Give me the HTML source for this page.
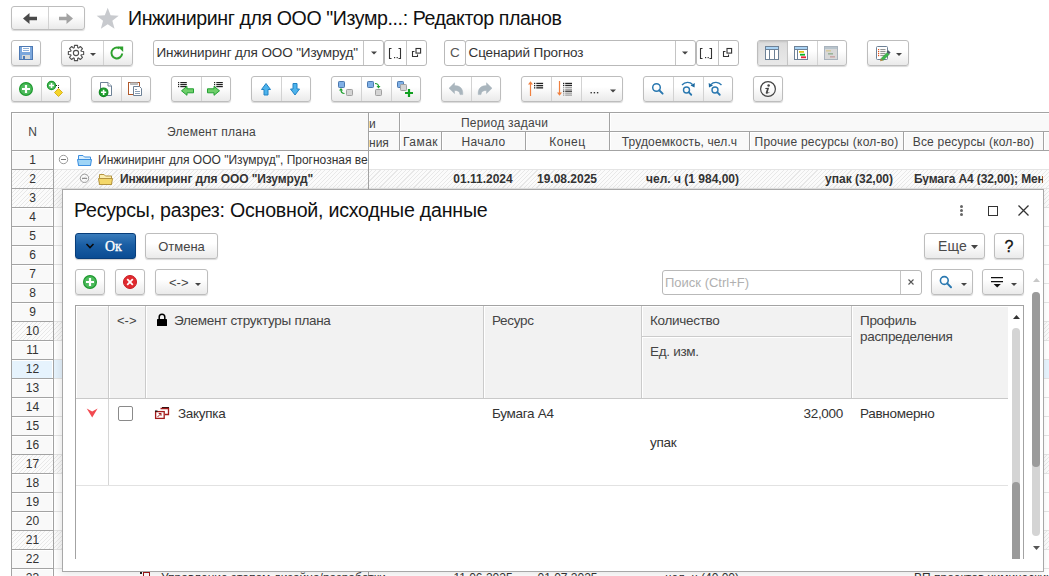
<!DOCTYPE html><html><head><meta charset="utf-8"><style>
*{box-sizing:border-box;margin:0;padding:0}
html,body{width:1049px;height:576px;overflow:hidden;background:#fff;font-family:"Liberation Sans",sans-serif;color:#333}
body{position:relative}
.a{position:absolute}
.btn{position:absolute;border:1px solid #bdbdbd;border-radius:3px;background:linear-gradient(#fff 0%,#fff 40%,#eaeaea 100%);box-shadow:0 1px 1px rgba(0,0,0,.15)}
.sep{position:absolute;top:0;bottom:0;width:1px;background:#d2d2d2}
.inp{position:absolute;border:1px solid #b9b9b9;border-radius:3px;background:#fff}
.t{position:absolute;white-space:nowrap;line-height:1}
.hatch{background:repeating-linear-gradient(135deg,#fbfbfb 0px,#fbfbfb 2.2px,#e8e8e8 2.2px,#e8e8e8 3px)}
svg{position:absolute;overflow:visible}
</style></head><body>
<div class="a" style="left:11px;top:112px;width:1038px;height:464px;background:#fff;border-left:1px solid #a3a3a3;border-top:1px solid #a3a3a3;overflow:hidden">
<div class="a" style="left:0;top:0;width:1100px;height:38px;background:#a3a3a3"></div>
<div class="a" style="left:0px;top:0px;width:41px;height:37px;background:#f9f9f9;border-left:1px solid #fff;border-top:1px solid #fff"></div>
<div class="a" style="left:42px;top:0px;width:314px;height:37px;background:#f9f9f9;border-left:1px solid #fff;border-top:1px solid #fff"></div>
<div class="a" style="left:357px;top:0px;width:30px;height:18px;background:#f9f9f9;border-left:1px solid #fff;border-top:1px solid #fff"></div>
<div class="a" style="left:357px;top:19px;width:30px;height:18px;background:#f9f9f9;border-left:1px solid #fff;border-top:1px solid #fff"></div>
<div class="a" style="left:388px;top:0px;width:209px;height:18px;background:#f9f9f9;border-left:1px solid #fff;border-top:1px solid #fff"></div>
<div class="a" style="left:388px;top:19px;width:41px;height:18px;background:#f9f9f9;border-left:1px solid #fff;border-top:1px solid #fff"></div>
<div class="a" style="left:430px;top:19px;width:83px;height:18px;background:#f9f9f9;border-left:1px solid #fff;border-top:1px solid #fff"></div>
<div class="a" style="left:514px;top:19px;width:83px;height:18px;background:#f9f9f9;border-left:1px solid #fff;border-top:1px solid #fff"></div>
<div class="a" style="left:598px;top:0px;width:490px;height:18px;background:#f9f9f9;border-left:1px solid #fff;border-top:1px solid #fff"></div>
<div class="a" style="left:598px;top:19px;width:139px;height:18px;background:#f9f9f9;border-left:1px solid #fff;border-top:1px solid #fff"></div>
<div class="a" style="left:738px;top:19px;width:153px;height:18px;background:#f9f9f9;border-left:1px solid #fff;border-top:1px solid #fff"></div>
<div class="a" style="left:892px;top:19px;width:139px;height:18px;background:#f9f9f9;border-left:1px solid #fff;border-top:1px solid #fff"></div>
<div class="a" style="left:1032px;top:19px;width:56px;height:18px;background:#f9f9f9;border-left:1px solid #fff;border-top:1px solid #fff"></div>
<div class="a" style="left:0;top:38px;width:41px;height:18px;background:#f9f9f9;border-top:1px solid #fff;border-right:1px solid #fff"></div>
<div class="a" style="left:0;top:56px;width:41px;height:1px;background:#a3a3a3"></div>
<div class="a" style="left:42px;top:56px;width:1100px;height:1px;background:#e4e4e4"></div>
<div class="t" style="left:0;top:41px;width:41px;text-align:center;font-size:12px;color:#333">1</div>
<div class="a hatch" style="left:0;top:57px;width:1100px;height:18px"></div>
<div class="a" style="left:0;top:75px;width:41px;height:1px;background:#a3a3a3"></div>
<div class="a" style="left:42px;top:75px;width:1100px;height:1px;background:#e4e4e4"></div>
<div class="t" style="left:0;top:60px;width:41px;text-align:center;font-size:12px;color:#333">2</div>
<div class="a hatch" style="left:0;top:76px;width:1100px;height:18px"></div>
<div class="a" style="left:0;top:94px;width:41px;height:1px;background:#a3a3a3"></div>
<div class="a" style="left:42px;top:94px;width:1100px;height:1px;background:#e4e4e4"></div>
<div class="t" style="left:0;top:79px;width:41px;text-align:center;font-size:12px;color:#333">3</div>
<div class="a" style="left:0;top:95px;width:41px;height:18px;background:#f9f9f9;border-top:1px solid #fff;border-right:1px solid #fff"></div>
<div class="a" style="left:0;top:113px;width:41px;height:1px;background:#a3a3a3"></div>
<div class="a" style="left:42px;top:113px;width:1100px;height:1px;background:#e4e4e4"></div>
<div class="t" style="left:0;top:98px;width:41px;text-align:center;font-size:12px;color:#333">4</div>
<div class="a" style="left:0;top:114px;width:41px;height:18px;background:#f9f9f9;border-top:1px solid #fff;border-right:1px solid #fff"></div>
<div class="a" style="left:0;top:132px;width:41px;height:1px;background:#a3a3a3"></div>
<div class="a" style="left:42px;top:132px;width:1100px;height:1px;background:#e4e4e4"></div>
<div class="t" style="left:0;top:117px;width:41px;text-align:center;font-size:12px;color:#333">5</div>
<div class="a" style="left:0;top:133px;width:41px;height:18px;background:#f9f9f9;border-top:1px solid #fff;border-right:1px solid #fff"></div>
<div class="a" style="left:0;top:151px;width:41px;height:1px;background:#a3a3a3"></div>
<div class="a" style="left:42px;top:151px;width:1100px;height:1px;background:#e4e4e4"></div>
<div class="t" style="left:0;top:136px;width:41px;text-align:center;font-size:12px;color:#333">6</div>
<div class="a" style="left:0;top:152px;width:41px;height:18px;background:#f9f9f9;border-top:1px solid #fff;border-right:1px solid #fff"></div>
<div class="a" style="left:0;top:170px;width:41px;height:1px;background:#a3a3a3"></div>
<div class="a" style="left:42px;top:170px;width:1100px;height:1px;background:#e4e4e4"></div>
<div class="t" style="left:0;top:155px;width:41px;text-align:center;font-size:12px;color:#333">7</div>
<div class="a" style="left:0;top:171px;width:41px;height:18px;background:#f9f9f9;border-top:1px solid #fff;border-right:1px solid #fff"></div>
<div class="a" style="left:0;top:189px;width:41px;height:1px;background:#a3a3a3"></div>
<div class="a" style="left:42px;top:189px;width:1100px;height:1px;background:#e4e4e4"></div>
<div class="t" style="left:0;top:174px;width:41px;text-align:center;font-size:12px;color:#333">8</div>
<div class="a" style="left:0;top:190px;width:41px;height:18px;background:#f9f9f9;border-top:1px solid #fff;border-right:1px solid #fff"></div>
<div class="a" style="left:0;top:208px;width:41px;height:1px;background:#a3a3a3"></div>
<div class="a" style="left:42px;top:208px;width:1100px;height:1px;background:#e4e4e4"></div>
<div class="t" style="left:0;top:193px;width:41px;text-align:center;font-size:12px;color:#333">9</div>
<div class="a hatch" style="left:0;top:209px;width:1100px;height:18px"></div>
<div class="a" style="left:0;top:227px;width:41px;height:1px;background:#a3a3a3"></div>
<div class="a" style="left:42px;top:227px;width:1100px;height:1px;background:#e4e4e4"></div>
<div class="t" style="left:0;top:212px;width:41px;text-align:center;font-size:12px;color:#333">10</div>
<div class="a" style="left:0;top:228px;width:41px;height:18px;background:#f9f9f9;border-top:1px solid #fff;border-right:1px solid #fff"></div>
<div class="a" style="left:0;top:246px;width:41px;height:1px;background:#a3a3a3"></div>
<div class="a" style="left:42px;top:246px;width:1100px;height:1px;background:#e4e4e4"></div>
<div class="t" style="left:0;top:231px;width:41px;text-align:center;font-size:12px;color:#333">11</div>
<div class="a" style="left:0;top:247px;width:41px;height:18px;background:#e6f3fd;border-top:1px solid #fff;border-right:1px solid #fff"></div>
<div class="a" style="left:42px;top:247px;width:1100px;height:18px;background:#e6f3fd"></div>
<div class="a" style="left:0;top:265px;width:41px;height:1px;background:#a3a3a3"></div>
<div class="a" style="left:42px;top:265px;width:1100px;height:1px;background:#e4e4e4"></div>
<div class="t" style="left:0;top:250px;width:41px;text-align:center;font-size:12px;color:#333">12</div>
<div class="a" style="left:0;top:266px;width:41px;height:18px;background:#f9f9f9;border-top:1px solid #fff;border-right:1px solid #fff"></div>
<div class="a" style="left:0;top:284px;width:41px;height:1px;background:#a3a3a3"></div>
<div class="a" style="left:42px;top:284px;width:1100px;height:1px;background:#e4e4e4"></div>
<div class="t" style="left:0;top:269px;width:41px;text-align:center;font-size:12px;color:#333">13</div>
<div class="a" style="left:0;top:285px;width:41px;height:18px;background:#f9f9f9;border-top:1px solid #fff;border-right:1px solid #fff"></div>
<div class="a" style="left:0;top:303px;width:41px;height:1px;background:#a3a3a3"></div>
<div class="a" style="left:42px;top:303px;width:1100px;height:1px;background:#e4e4e4"></div>
<div class="t" style="left:0;top:288px;width:41px;text-align:center;font-size:12px;color:#333">14</div>
<div class="a" style="left:0;top:304px;width:41px;height:18px;background:#f9f9f9;border-top:1px solid #fff;border-right:1px solid #fff"></div>
<div class="a" style="left:0;top:322px;width:41px;height:1px;background:#a3a3a3"></div>
<div class="a" style="left:42px;top:322px;width:1100px;height:1px;background:#e4e4e4"></div>
<div class="t" style="left:0;top:307px;width:41px;text-align:center;font-size:12px;color:#333">15</div>
<div class="a" style="left:0;top:323px;width:41px;height:18px;background:#f9f9f9;border-top:1px solid #fff;border-right:1px solid #fff"></div>
<div class="a" style="left:0;top:341px;width:41px;height:1px;background:#a3a3a3"></div>
<div class="a" style="left:42px;top:341px;width:1100px;height:1px;background:#e4e4e4"></div>
<div class="t" style="left:0;top:326px;width:41px;text-align:center;font-size:12px;color:#333">16</div>
<div class="a hatch" style="left:0;top:342px;width:1100px;height:18px"></div>
<div class="a" style="left:0;top:360px;width:41px;height:1px;background:#a3a3a3"></div>
<div class="a" style="left:42px;top:360px;width:1100px;height:1px;background:#e4e4e4"></div>
<div class="t" style="left:0;top:345px;width:41px;text-align:center;font-size:12px;color:#333">17</div>
<div class="a" style="left:0;top:361px;width:41px;height:18px;background:#f9f9f9;border-top:1px solid #fff;border-right:1px solid #fff"></div>
<div class="a" style="left:0;top:379px;width:41px;height:1px;background:#a3a3a3"></div>
<div class="a" style="left:42px;top:379px;width:1100px;height:1px;background:#e4e4e4"></div>
<div class="t" style="left:0;top:364px;width:41px;text-align:center;font-size:12px;color:#333">18</div>
<div class="a" style="left:0;top:380px;width:41px;height:18px;background:#f9f9f9;border-top:1px solid #fff;border-right:1px solid #fff"></div>
<div class="a" style="left:0;top:398px;width:41px;height:1px;background:#a3a3a3"></div>
<div class="a" style="left:42px;top:398px;width:1100px;height:1px;background:#e4e4e4"></div>
<div class="t" style="left:0;top:383px;width:41px;text-align:center;font-size:12px;color:#333">19</div>
<div class="a" style="left:0;top:399px;width:41px;height:18px;background:#f9f9f9;border-top:1px solid #fff;border-right:1px solid #fff"></div>
<div class="a" style="left:0;top:417px;width:41px;height:1px;background:#a3a3a3"></div>
<div class="a" style="left:42px;top:417px;width:1100px;height:1px;background:#e4e4e4"></div>
<div class="t" style="left:0;top:402px;width:41px;text-align:center;font-size:12px;color:#333">20</div>
<div class="a hatch" style="left:0;top:418px;width:1100px;height:18px"></div>
<div class="a" style="left:0;top:436px;width:41px;height:1px;background:#a3a3a3"></div>
<div class="a" style="left:42px;top:436px;width:1100px;height:1px;background:#e4e4e4"></div>
<div class="t" style="left:0;top:421px;width:41px;text-align:center;font-size:12px;color:#333">21</div>
<div class="a" style="left:0;top:437px;width:41px;height:18px;background:#f9f9f9;border-top:1px solid #fff;border-right:1px solid #fff"></div>
<div class="a" style="left:0;top:455px;width:41px;height:1px;background:#a3a3a3"></div>
<div class="a" style="left:42px;top:455px;width:1100px;height:1px;background:#e4e4e4"></div>
<div class="t" style="left:0;top:440px;width:41px;text-align:center;font-size:12px;color:#333">22</div>
<div class="a" style="left:0;top:456px;width:41px;height:18px;background:#f9f9f9;border-top:1px solid #fff;border-right:1px solid #fff"></div>
<div class="a" style="left:0;top:474px;width:41px;height:1px;background:#a3a3a3"></div>
<div class="a" style="left:42px;top:474px;width:1100px;height:1px;background:#e4e4e4"></div>
<div class="t" style="left:0;top:459px;width:41px;text-align:center;font-size:12px;color:#333">23</div>
<div class="a" style="left:41px;top:-12px;width:1px;height:600px;background:#a3a3a3;top:0"></div>
<div class="a" style="left:356px;top:0;width:1px;height:600px;background:#a3a3a3"></div>
<div class="t" style="left:0;top:13px;width:41px;text-align:center;font-size:12px;color:#444">N</div>
<div class="t" style="left:42px;top:13px;width:315px;text-align:center;font-size:12px;color:#444;letter-spacing:.25px">Элемент плана</div>
<div class="t" style="left:357px;top:5px;font-size:12px;color:#444">и</div>
<div class="t" style="left:357px;top:24px;font-size:12px;color:#444">ния</div>
<div class="t" style="left:388px;top:4px;width:209px;text-align:center;font-size:12px;letter-spacing:.25px;color:#444">Период задачи</div>
<div class="t" style="left:388px;top:23px;width:41px;text-align:center;font-size:12px;letter-spacing:0.5px;color:#444">Гамак</div>
<div class="t" style="left:430px;top:23px;width:83px;text-align:center;font-size:12px;letter-spacing:0.4px;color:#444">Начало</div>
<div class="t" style="left:514px;top:23px;width:83px;text-align:center;font-size:12px;letter-spacing:0.5px;color:#444">Конец</div>
<div class="t" style="left:598px;top:23px;width:139px;text-align:center;font-size:12px;letter-spacing:0.13px;color:#444">Трудоемкость, чел.ч</div>
<div class="t" style="left:738px;top:23px;width:153px;text-align:center;font-size:12px;letter-spacing:0.25px;color:#444">Прочие ресурсы (кол-во)</div>
<div class="t" style="left:892px;top:23px;width:139px;text-align:center;font-size:12px;letter-spacing:0.2px;color:#444">Все ресурсы (кол-во)</div>
<div class="t" style="left:86px;top:41px;width:270px;overflow:hidden;font-size:12px;color:#333">Инжиниринг для ООО "Изумруд", Прогнозная версия</div>
<div class="t" style="left:108px;top:60px;font-size:12px;font-weight:bold;letter-spacing:-.1px;color:#333">Инжиниринг для ООО "Изумруд"</div>
<div class="t" style="left:429px;top:60px;width:84px;text-align:center;font-size:12px;font-weight:bold;color:#333">01.11.2024</div>
<div class="t" style="left:513px;top:60px;width:84px;text-align:center;font-size:12px;font-weight:bold;color:#333">19.08.2025</div>
<div class="t" style="left:597px;top:60px;width:130px;text-align:right;font-size:12px;font-weight:bold;color:#333">чел. ч (1 984,00)</div>
<div class="t" style="left:737px;top:60px;width:144px;text-align:right;font-size:12px;font-weight:bold;color:#333">упак (32,00)</div>
<div class="t" style="left:902px;top:60px;width:129px;overflow:hidden;font-size:12px;font-weight:bold;letter-spacing:-.12px;color:#333">Бумага А4 (32,00); Менеджер</div>
<div class="t" style="left:149px;top:459px;font-size:12px;color:#333">Управление этапом дизайна/разработки</div>
<div class="t" style="left:429px;top:459px;width:84px;text-align:center;font-size:12px;color:#333">11.06.2025</div>
<div class="t" style="left:513px;top:459px;width:85px;text-align:center;font-size:12px;color:#333">01.07.2025</div>
<div class="t" style="left:597px;top:459px;width:130px;text-align:right;font-size:12px;color:#333">чел. ч (40,00)</div>
<div class="t" style="left:902px;top:459px;font-size:12px;color:#333">ВП проектов химических</div>
</div>
<div class="btn" style="left:11px;top:6px;width:74px;height:24px"><div class="sep" style="left:36px"></div></div>
<div class="t" style="left:128px;top:9px;font-size:19.6px;color:#111;letter-spacing:-.41px">Инжиниринг для ООО "Изумр...: Редактор планов</div>
<div class="btn" style="left:11px;top:40px;width:30px;height:26px"></div>
<div class="btn" style="left:61px;top:40px;width:72px;height:26px"><div class="sep" style="left:41px"></div></div>
<div class="inp" style="left:153px;top:40px;width:231px;height:26px"><div class="sep" style="left:209px;background:#c4c4c4"></div><div class="t" style="left:2.5px;top:5px;font-size:13.5px;letter-spacing:-.12px;color:#333">Инжиниринг для ООО "Изумруд"</div></div>
<div class="inp" style="left:384px;top:40px;width:43px;height:26px"><div class="sep" style="left:21px;background:#c4c4c4"></div></div>
<div class="inp" style="left:444px;top:40px;width:22px;height:26px"><div class="t" style="left:5px;top:5px;font-size:13.5px;color:#555">С</div></div>
<div class="inp" style="left:465px;top:40px;width:231px;height:26px"><div class="sep" style="left:209px;background:#c4c4c4"></div><div class="t" style="left:2.5px;top:5px;font-size:13.5px;letter-spacing:-.12px;color:#333">Сценарий Прогноз</div></div>
<div class="inp" style="left:696px;top:40px;width:43px;height:26px"><div class="sep" style="left:21px;background:#c4c4c4"></div></div>
<div class="btn" style="left:757px;top:40px;width:90px;height:26px;overflow:hidden"><div class="a" style="left:0;top:0;width:30px;height:24px;background:linear-gradient(#dcdcdc,#e9e9e9);box-shadow:inset 0 1px 2px rgba(0,0,0,.12)"></div><div class="sep" style="left:29px;background:#c4c4c4"></div><div class="sep" style="left:59px"></div></div>
<div class="btn" style="left:867px;top:40px;width:42px;height:26px"></div>
<div class="btn" style="left:11px;top:76px;width:60px;height:26px"><div class="sep" style="left:29px"></div></div>
<div class="btn" style="left:91px;top:76px;width:60px;height:26px"><div class="sep" style="left:29px"></div></div>
<div class="btn" style="left:171px;top:76px;width:60px;height:26px"><div class="sep" style="left:29px"></div></div>
<div class="btn" style="left:251px;top:76px;width:60px;height:26px"><div class="sep" style="left:29px"></div></div>
<div class="btn" style="left:331px;top:76px;width:90px;height:26px"><div class="sep" style="left:29px"></div><div class="sep" style="left:59px"></div></div>
<div class="btn" style="left:441px;top:76px;width:60px;height:26px"><div class="sep" style="left:29px"></div></div>
<div class="btn" style="left:521px;top:76px;width:102px;height:26px"><div class="sep" style="left:29px"></div><div class="sep" style="left:59px"></div></div>
<div class="btn" style="left:643px;top:76px;width:90px;height:26px"><div class="sep" style="left:29px"></div><div class="sep" style="left:59px"></div></div>
<div class="btn" style="left:753px;top:76px;width:30px;height:26px"></div>
<svg style="left:0;top:0" width="1049" height="576"><path d="M23 18.5L29.5 13V16.8H37V20.3H29.5V24Z" fill="#4a4a4a"/><path d="M73 18.5L66.5 13V16.8H59V20.3H66.5V24Z" fill="#a3a3a3"/><path d="M107.70 7.70L110.58 15.34L118.73 15.72L112.36 20.81L114.52 28.68L107.70 24.20L100.88 28.68L103.04 20.81L96.67 15.72L104.82 15.34Z" fill="#c8cace"/><rect x="19.5" y="46.5" width="13" height="13" fill="#7ba7dc" stroke="#4d79b3"/><rect x="22" y="47" width="8" height="5" fill="#fff"/><path d="M23 48.5H29M23 50.5H29" stroke="#8fb0d8" stroke-width="1"/><rect x="22" y="55" width="8" height="4" fill="#d5d9d9"/><rect x="23" y="56" width="2" height="3" fill="#4d79b3"/><path d="M83.64 51.45L83.64 54.55L81.22 54.73L80.92 55.47L82.50 57.31L80.31 59.50L78.47 57.92L77.73 58.22L77.55 60.64L74.45 60.64L74.27 58.22L73.53 57.92L71.69 59.50L69.50 57.31L71.08 55.47L70.78 54.73L68.36 54.55L68.36 51.45L70.78 51.27L71.08 50.53L69.50 48.69L71.69 46.50L73.53 48.08L74.27 47.78L74.45 45.36L77.55 45.36L77.73 47.78L78.47 48.08L80.31 46.50L82.50 48.69L80.92 50.53L81.22 51.27Z" fill="#fff" stroke="#505050" stroke-width="1.1" stroke-linejoin="round"/><circle cx="76" cy="53" r="2.6" fill="none" stroke="#505050" stroke-width="1.1"/><path d="M90 53H96L93 56Z" fill="#444"/><path d="M122.2 53.5A5.4 5.4 0 1 1 119.5 48.3" stroke="#2ea12e" stroke-width="2" fill="none"/><path d="M117.6 46.4H123.2V52Z" fill="#2ea12e"/><path d="M371 51.5H377L374 54.5Z" fill="#444"/><path d="M682 51.5H688L685 54.5Z" fill="#444"/><path d="M391.5 48.5H389.5V58.5H391.5M398.5 48.5H400.5V58.5H398.5" stroke="#333" stroke-width="1.1" fill="none"/><rect x="394" y="57" width="1.2" height="1.2" fill="#333"/><rect x="396.6" y="57" width="1.2" height="1.2" fill="#333"/><path d="M414.5 51.5H412.5V56.5H417.5V54.5" stroke="#333" stroke-width="1.1" fill="none"/><rect x="416" y="48.5" width="4.6" height="4.6" fill="none" stroke="#333" stroke-width="1.1"/><path d="M702.5 48.5H700.5V58.5H702.5M709.5 48.5H711.5V58.5H709.5" stroke="#333" stroke-width="1.1" fill="none"/><rect x="705" y="57" width="1.2" height="1.2" fill="#333"/><rect x="707.6" y="57" width="1.2" height="1.2" fill="#333"/><path d="M725.5 51.5H723.5V56.5H728.5V54.5" stroke="#333" stroke-width="1.1" fill="none"/><rect x="727" y="48.5" width="4.6" height="4.6" fill="none" stroke="#333" stroke-width="1.1"/><rect x="765.5" y="46.5" width="13" height="13" fill="#fff" stroke="#6d8196"/><rect x="766" y="47" width="12" height="2" fill="#a9d3f5"/><path d="M766 49.5H778" stroke="#6d8196" stroke-width="1"/><path d="M769.5 49.5V59.5M774.5 49.5V59.5" stroke="#6d8196" stroke-width="1"/><rect x="794.5" y="46.5" width="13" height="13" fill="#fff" stroke="#6d8196"/><rect x="795" y="47" width="12" height="2" fill="#a9d3f5"/><path d="M795 49.5H807" stroke="#6d8196" stroke-width="1"/><path d="M797.5 49.5V59.5" stroke="#6d8196" stroke-width="1"/><rect x="799" y="51" width="5" height="1.8" fill="#e2c21a"/><rect x="800" y="53.8" width="5" height="1.8" fill="#0ab12a"/><rect x="801" y="56.4" width="5" height="1.8" fill="#e8203a"/><rect x="824.5" y="46.5" width="13" height="13" fill="#d8d8d8" stroke="#a9b3bd"/><rect x="825" y="47" width="12" height="2" fill="#b8c4cc"/><rect x="826" y="50" width="5" height="1.6" fill="#d6cba0"/><rect x="828" y="53" width="5" height="1.6" fill="#9ab49a"/><rect x="830" y="56" width="5" height="1.6" fill="#c9a8a8"/><rect x="876.5" y="46.5" width="11" height="13" rx="1" fill="#fff" stroke="#6d8196"/><rect x="878" y="49" width="1.2" height="1.2" fill="#e0501a"/><rect x="880.3" y="49.1" width="5.2" height="1" fill="#8a8a8a"/><rect x="878" y="51" width="1.2" height="1.2" fill="#e0501a"/><rect x="880.3" y="51.1" width="5.2" height="1" fill="#8a8a8a"/><rect x="878" y="53" width="1.2" height="1.2" fill="#e0501a"/><rect x="880.3" y="53.1" width="5.2" height="1" fill="#8a8a8a"/><rect x="878" y="55" width="1.2" height="1.2" fill="#e0501a"/><rect x="880.3" y="55.1" width="5.2" height="1" fill="#8a8a8a"/><path d="M881 58.6L887.2 52.4L889.2 54.4L883 60.6Z" fill="#3cb84c" stroke="#2f8a3a" stroke-width=".5"/><path d="M886.6 51.8L888.2 50.2L890.6 52.6L889 54.2Z" fill="#4a5a68"/><path d="M881 58.6L880 61.2L883 60.6Z" fill="#a8803a"/><path d="M896 53H902L899 56Z" fill="#444"/><circle cx="26" cy="89" r="6.4" fill="#4dba5c" stroke="#1f9a30" stroke-width="1.2"/><path d="M22 89H30M26 85V93" stroke="#fff" stroke-width="2.2"/><circle cx="51.5" cy="85.5" r="4.1" fill="#4dba5c" stroke="#1f9a30" stroke-width="1.2"/><path d="M49.0 85.5H54.0M51.5 83.0V88.0" stroke="#fff" stroke-width="1.5"/><path d="M56 85.5H58.5V88" stroke="#111" stroke-width="1" stroke-dasharray="1 1" fill="none"/><path d="M58.5 88.5L62.5 92.5L58.5 96.5L54.5 92.5Z" fill="#f5d42a" stroke="#cfa400" stroke-width=".8"/><path d="M100.5 82.5H108L111.5 86V95.5H100.5Z" fill="#fff" stroke="#6d8196"/><path d="M108 82.5V86H111.5" fill="#fff" stroke="#6d8196"/><circle cx="103.6" cy="92.3" r="4.3" fill="#1ea02e" stroke="#158a24" stroke-width="1.2"/><path d="M101.0 92.3H106.19999999999999M103.6 89.7V94.89999999999999" stroke="#fff" stroke-width="1.6"/><rect x="128.5" y="82.5" width="11" height="12" fill="#fff" stroke="#b0582a"/><path d="M130.5 82.5H137.5V84.5H130.5Z" fill="#c0c0c0" stroke="#999" stroke-width=".6"/><path d="M133.5 86.5H139.5L141.5 88.5V95.5H133.5Z" fill="#fff" stroke="#6d8196"/><path d="M135 89.5H137M135 91.5H140M135 93.5H140" stroke="#8aa0b8" stroke-width="1"/><rect x="178" y="82" width="1.2" height="1.2" fill="#222"/><rect x="180.3" y="82" width="6.5" height="1.2" fill="#222"/><rect x="178" y="84" width="1.2" height="1.2" fill="#222"/><rect x="180.3" y="84" width="6.5" height="1.2" fill="#222"/><rect x="178" y="86" width="1.2" height="1.2" fill="#222"/><rect x="180.3" y="86" width="6.5" height="1.2" fill="#222"/><path d="M181.5 90.8L187 86.3V88.8H193.5V92.8H187V95.3Z" fill="#6fcf6a" stroke="#23a033" stroke-width="1" stroke-linejoin="round"/><rect x="214" y="82" width="1.2" height="1.2" fill="#222"/><rect x="216.3" y="82" width="6.5" height="1.2" fill="#222"/><rect x="214" y="84" width="1.2" height="1.2" fill="#222"/><rect x="216.3" y="84" width="6.5" height="1.2" fill="#222"/><rect x="214" y="86" width="1.2" height="1.2" fill="#222"/><rect x="216.3" y="86" width="6.5" height="1.2" fill="#222"/><path d="M219.5 90.8L214 86.3V88.8H207.5V92.8H214V95.3Z" fill="#6fcf6a" stroke="#23a033" stroke-width="1" stroke-linejoin="round"/><path d="M266 83.5L270.5 89.5H268V95H264V89.5H261.5Z" fill="#4db3ec" stroke="#2383c4" stroke-width="1" stroke-linejoin="round"/><path d="M295 95L299.5 89H297V83.5H293V89H290.5Z" fill="#4db3ec" stroke="#2383c4" stroke-width="1" stroke-linejoin="round"/><rect x="338.5" y="81.5" width="6" height="6" rx=".8" fill="#80b0e6" stroke="#4a78ae"/><rect x="346.5" y="89.5" width="6" height="6" rx=".8" fill="#d4d4d4" stroke="#a0a0a0"/><path d="M344.5 93.5C342 93.5 341 92 341 89.5" stroke="#1ea02e" stroke-width="1.2" fill="none"/><path d="M339 90.5L341 88L343 90.5Z" fill="#1ea02e"/><rect x="367.5" y="81.5" width="6" height="6" rx=".8" fill="#80b0e6" stroke="#4a78ae"/><rect x="375.5" y="89.5" width="6" height="6" rx=".8" fill="#d4d4d4" stroke="#a0a0a0"/><path d="M375 83.5C377 83.5 378.5 84.5 378.5 86.5" stroke="#1ea02e" stroke-width="1.2" fill="none"/><path d="M376.5 86L378.5 88.5L380.5 86Z" fill="#1ea02e"/><rect x="397.5" y="81.5" width="6" height="6" rx=".8" fill="#80b0e6" stroke="#4a78ae"/><rect x="400.5" y="84.5" width="6" height="6" rx=".8" fill="#d4d4d4" stroke="#a0a0a0"/><path d="M405 93H413M409 89V97" stroke="#10a020" stroke-width="2.2"/><path d="M449 88.2L454.5 82.8V85.6C460 85.6 463.2 88.5 462.8 94.6H460C459.8 91.5 458 90.4 454.5 90.4V93.6Z" fill="#a9b5bd" stroke="#a9b5bd" stroke-width=".5" stroke-linejoin="round"/><path d="M492 88.2L486.5 82.8V85.6C481 85.6 477.8 88.5 478.2 94.6H481C481.2 91.5 483 90.4 486.5 90.4V93.6Z" fill="#a9b5bd" stroke="#a9b5bd" stroke-width=".5" stroke-linejoin="round"/><path d="M530.5 96V83" stroke="#f08040" stroke-width="1.2"/><path d="M528 84.5L530.5 81.2L533 84.5Z" fill="#f08040"/><rect x="534" y="82.8" width="1.3" height="1.3" fill="#222"/><rect x="536.3" y="82.8" width="6.8" height="1.3" fill="#222"/><rect x="534" y="85.0" width="1.3" height="1.3" fill="#222"/><rect x="536.3" y="85.0" width="6.8" height="1.3" fill="#222"/><rect x="534" y="87.2" width="1.3" height="1.3" fill="#222"/><rect x="536.3" y="87.2" width="6.8" height="1.3" fill="#222"/><path d="M559.5 81V94" stroke="#f08040" stroke-width="1.2"/><path d="M557 92.5L559.5 95.8L562 92.5Z" fill="#f08040"/><rect x="563" y="82.8" width="1.3" height="1.2" fill="#222"/><rect x="565.2" y="82.8" width="6.8" height="1.2" fill="#222"/><rect x="563" y="84.75" width="1.3" height="1.2" fill="#222"/><rect x="565.2" y="84.75" width="6.8" height="1.2" fill="#222"/><rect x="563" y="86.7" width="1.3" height="1.2" fill="#999"/><rect x="565.2" y="86.7" width="6.8" height="1.2" fill="#999"/><rect x="563" y="88.64999999999999" width="1.3" height="1.2" fill="#999"/><rect x="565.2" y="88.64999999999999" width="6.8" height="1.2" fill="#999"/><rect x="563" y="90.6" width="1.3" height="1.2" fill="#222"/><rect x="565.2" y="90.6" width="6.8" height="1.2" fill="#222"/><rect x="563" y="92.55" width="1.3" height="1.2" fill="#999"/><rect x="565.2" y="92.55" width="6.8" height="1.2" fill="#999"/><rect x="563" y="94.5" width="1.3" height="1.2" fill="#999"/><rect x="565.2" y="94.5" width="6.8" height="1.2" fill="#999"/><rect x="590.5" y="92" width="1.4" height="1.4" fill="#333"/><rect x="593.7" y="92" width="1.4" height="1.4" fill="#333"/><rect x="596.9" y="92" width="1.4" height="1.4" fill="#333"/><path d="M610 89.5H616L613 92.5Z" fill="#444"/><circle cx="656.5" cy="87.5" r="3.8" fill="none" stroke="#2a78b0" stroke-width="1.5"/><path d="M659.236 90.236L662.636 93.63600000000001" stroke="#2a78b0" stroke-width="1.9" stroke-linecap="round"/><circle cx="686.5" cy="90" r="3" fill="none" stroke="#2a78b0" stroke-width="1.4"/><path d="M688.66 92.16L691.26 94.75999999999999" stroke="#2a78b0" stroke-width="1.7999999999999998" stroke-linecap="round"/><path d="M682 85C685 81.5 690 81.5 692.5 84.5" stroke="#2a78b0" stroke-width="1.3" fill="none"/><path d="M690.5 85.5L694.8 83L694.5 87.5Z" fill="#1a68a0"/><circle cx="715" cy="90" r="3" fill="none" stroke="#2a78b0" stroke-width="1.4"/><path d="M717.16 92.16L719.76 94.75999999999999" stroke="#2a78b0" stroke-width="1.7999999999999998" stroke-linecap="round"/><path d="M721.5 85C718.5 81.5 713.5 81.5 711 84.5" stroke="#2a78b0" stroke-width="1.3" fill="none"/><path d="M713 85.5L708.7 83L709 87.5Z" fill="#1a68a0"/><circle cx="768" cy="89" r="7.4" fill="none" stroke="#444" stroke-width="1.2"/><circle cx="768.6" cy="85.4" r="1.25" fill="#444"/><path d="M765.4 88.1L769.1 87.7L767.8 92.1Q767.7 92.7 768.4 92.4L769.6 91.7L769.4 92.6Q768 93.9 766.5 93.7Q765.5 93.5 765.8 92.4L766.9 88.9L765.3 88.9Z" fill="#444"/><circle cx="63.5" cy="159.5" r="4.2" fill="none" stroke="#9a9a9a" stroke-width="1"/><path d="M61 159.5H66" stroke="#777" stroke-width="1"/><circle cx="84.5" cy="178.3" r="4.2" fill="none" stroke="#9a9a9a" stroke-width="1"/><path d="M82 178.3H87" stroke="#777" stroke-width="1"/><path d="M78.5 165.5V155.5H83L84.5 157H90.5V165.5Z" fill="#d8eefc" stroke="#3d8fe0" stroke-width="1"/><path d="M77.5 159.5H90L91.5 159.5L90.5 165.5H78.5Z" fill="#9fd5f6" stroke="#3d8fe0" stroke-width="1"/><path d="M99.5 184.5V174.5H104L105.5 176H111.5V184.5Z" fill="#fbeeb0" stroke="#b59440" stroke-width="1"/><path d="M98.5 178.5H111L112.5 178.5L111.5 184.5H99.5Z" fill="#f4d86a" stroke="#b59440" stroke-width="1"/><rect x="140" y="572" width="2" height="2" fill="#222"/><rect x="143.5" y="572.5" width="6" height="5" fill="#fff" stroke="#a01818"/></svg>
<div class="a" style="left:62px;top:189px;width:982px;height:383px;border:1px solid #a8a8a8;background:#fff;box-shadow:-2px 2px 8px rgba(0,0,0,.10)"></div>
<div class="t" style="left:74px;top:201px;font-size:19.6px;color:#111;letter-spacing:-.23px">Ресурсы, разрез: Основной, исходные данные</div>
<div class="a" style="left:960px;top:205px;width:3px;height:3px;border-radius:50%;background:#666"></div>
<div class="a" style="left:960px;top:209px;width:3px;height:3px;border-radius:50%;background:#666"></div>
<div class="a" style="left:960px;top:213px;width:3px;height:3px;border-radius:50%;background:#666"></div>
<div class="a" style="left:988px;top:206px;width:9.5px;height:9.5px;border:1.4px solid #333"></div>
<svg style="left:1018px;top:205px" width="11" height="11"><path d="M0.5 0.5L10.5 10.5M10.5 0.5L0.5 10.5" stroke="#333" stroke-width="1.3"/></svg>
<div class="a" style="left:75px;top:233px;width:61px;height:26px;border-radius:3px;background:linear-gradient(#3a7cbb,#1a5ea4 45%,#0a4c93);border:1px solid #073d7a;box-shadow:0 1px 1px rgba(0,0,0,.2)"></div>
<svg style="left:85px;top:243px" width="10" height="6"><path d="M1.5 1L5 4.6L8.5 1" stroke="#0a0a0a" stroke-width="1.5" fill="none"/></svg>
<div class="t" style="left:105px;top:240px;font-size:14px;font-family:'Liberation Serif',serif;color:#fff;-webkit-text-stroke:.35px #fff">Ок</div>
<div class="btn" style="left:145px;top:233px;width:73px;height:26px"></div>
<div class="t" style="left:145px;top:240px;width:73px;text-align:center;font-size:13px;color:#444">Отмена</div>
<div class="btn" style="left:924px;top:233px;width:61px;height:26px"></div>
<div class="t" style="left:938px;top:239px;font-size:14px;letter-spacing:.2px;color:#4a4a4a">Еще</div>
<svg style="left:971px;top:245px" width="7" height="4"><path d="M0 0H7L3.5 4Z" fill="#444"/></svg>
<div class="btn" style="left:994px;top:233px;width:30px;height:26px"></div>
<div class="t" style="left:994px;top:239px;width:30px;text-align:center;font-size:16px;color:#111;-webkit-text-stroke:.3px #111">?</div>
<div class="btn" style="left:75px;top:269px;width:30px;height:26px"></div>
<div class="btn" style="left:115px;top:269px;width:30px;height:26px"></div>
<div class="btn" style="left:155px;top:269px;width:53px;height:26px"></div>
<div class="t" style="left:169px;top:276px;font-size:13px;color:#444">&lt;-&gt;</div>
<svg style="left:195px;top:283px" width="6" height="3"><path d="M0 0H6L3 3Z" fill="#444"/></svg>
<div class="inp" style="left:662px;top:270px;width:260px;height:25px"><div class="sep" style="left:237px;background:#c4c4c4"></div></div>
<div class="t" style="left:665px;top:276px;font-size:13px;color:#b0b0b0">Поиск (Ctrl+F)</div>
<svg style="left:908px;top:279px" width="6" height="6"><path d="M.5 .5L5.5 5.5M5.5 .5L.5 5.5" stroke="#555" stroke-width="1.1"/></svg>
<div class="btn" style="left:931px;top:269px;width:42px;height:26px"></div>
<svg style="left:961px;top:283px" width="6" height="3"><path d="M0 0H6L3 3Z" fill="#444"/></svg>
<div class="btn" style="left:982px;top:269px;width:42px;height:26px"></div>
<svg style="left:1011px;top:283px" width="6" height="3"><path d="M0 0H6L3 3Z" fill="#444"/></svg>
<svg style="left:1033px;top:278px" width="7" height="4"><path d="M0 4H7L3.5 0Z" fill="#c8c8c8"/></svg>
<div class="a" style="left:1032px;top:292px;width:8px;height:244px;border-radius:4px;background:#d4d4d4"></div>
<div class="a" style="left:1032px;top:292px;width:8px;height:175px;border-radius:4px;background:#9a9a9a"></div>
<svg style="left:1033px;top:546px" width="7" height="4"><path d="M0 0H7L3.5 4Z" fill="#555"/></svg>
<div class="a" style="left:75px;top:305px;width:949px;height:254px;border:1px solid #a3a3a3;border-bottom:none;border-right-color:#a3a3a3;background:#fff"></div>
<div class="a" style="left:76px;top:306px;width:932px;height:92px;background:#f2f2f2"></div>
<div class="a" style="left:76px;top:398px;width:932px;height:1px;background:#c9c9c9"></div>
<div class="a" style="left:76px;top:306px;width:32px;height:92px;border:1px solid #fff;border-right:none;border-bottom:none"></div>
<div class="a" style="left:109px;top:306px;width:36px;height:92px;border:1px solid #fff;border-right:none;border-bottom:none"></div>
<div class="a" style="left:146px;top:306px;width:337px;height:92px;border:1px solid #fff;border-right:none;border-bottom:none"></div>
<div class="a" style="left:484px;top:306px;width:157px;height:92px;border:1px solid #fff;border-right:none;border-bottom:none"></div>
<div class="a" style="left:642px;top:306px;width:209px;height:92px;border:1px solid #fff;border-right:none;border-bottom:none"></div>
<div class="a" style="left:852px;top:306px;width:156px;height:92px;border:1px solid #fff;border-right:none;border-bottom:none"></div>
<div class="a" style="left:108px;top:306px;width:1px;height:92px;background:#cbcbcb"></div>
<div class="a" style="left:145px;top:306px;width:1px;height:92px;background:#cbcbcb"></div>
<div class="a" style="left:483px;top:306px;width:1px;height:92px;background:#cbcbcb"></div>
<div class="a" style="left:641px;top:306px;width:1px;height:92px;background:#cbcbcb"></div>
<div class="a" style="left:851px;top:306px;width:1px;height:92px;background:#cbcbcb"></div>
<div class="a" style="left:642px;top:336px;width:209px;height:1px;background:#cbcbcb"></div>
<div class="a" style="left:642px;top:337px;width:209px;height:1px;background:#fff"></div>
<div class="t" style="left:117px;top:314px;font-size:13px;color:#444">&lt;-&gt;</div>
<div class="t" style="left:174px;top:314px;font-size:13.5px;letter-spacing:-.3px;color:#444">Элемент структуры плана</div>
<div class="t" style="left:492px;top:314px;font-size:13.5px;letter-spacing:-.3px;color:#444">Ресурс</div>
<div class="t" style="left:650px;top:314px;font-size:13.5px;letter-spacing:-.3px;color:#444">Количество</div>
<div class="t" style="left:650px;top:345px;font-size:13.5px;letter-spacing:-.3px;color:#444">Ед. изм.</div>
<div class="t" style="left:860px;top:313px;font-size:13.5px;letter-spacing:-.3px;color:#444;line-height:16px;white-space:normal;width:120px">Профиль распределения</div>
<div class="a" style="left:108px;top:399px;width:1px;height:86px;background:#d6d6d6"></div>
<div class="a" style="left:76px;top:485px;width:932px;height:1px;background:#e2e2e2"></div>
<div class="a" style="left:118px;top:406px;width:15px;height:15px;border:1px solid #8a8a8a;border-radius:2px;background:#fff"></div>
<div class="t" style="left:178px;top:407px;font-size:13.5px;letter-spacing:-.3px;color:#333">Закупка</div>
<div class="t" style="left:492px;top:407px;font-size:13.5px;letter-spacing:-.3px;color:#333">Бумага А4</div>
<div class="t" style="left:700px;top:407px;width:143px;text-align:right;font-size:13.5px;letter-spacing:-.3px;color:#333">32,000</div>
<div class="t" style="left:860px;top:407px;font-size:13.5px;letter-spacing:-.3px;color:#333">Равномерно</div>
<div class="t" style="left:650px;top:436px;font-size:13.5px;letter-spacing:-.3px;color:#333">упак</div>
<svg style="left:1013px;top:315px" width="7" height="4"><path d="M0 4H7L3.5 0Z" fill="#333"/></svg>
<div class="a" style="left:1012px;top:328px;width:8px;height:231px;border-radius:4px 4px 0 0;background:#d4d4d4"></div>
<div class="a" style="left:1012px;top:482px;width:8px;height:77px;border-radius:4px 4px 0 0;background:#9a9a9a"></div>
<svg style="left:0;top:0" width="1049" height="576"><circle cx="90" cy="282" r="6.4" fill="#4dba5c" stroke="#1f9a30" stroke-width="1.2"/><path d="M86 282H94M90 278V286" stroke="#fff" stroke-width="2.2"/><circle cx="130" cy="282" r="6.5" fill="#e02a2f" stroke="#c81c22" stroke-width="1"/><path d="M127.2 279.2L132.8 284.8M132.8 279.2L127.2 284.8" stroke="#fff" stroke-width="1.8"/><circle cx="944.3" cy="280.5" r="3.9" fill="none" stroke="#2a78b0" stroke-width="1.6"/><path d="M947.2 283.4L951 287.2" stroke="#2a78b0" stroke-width="2" stroke-linecap="round"/><path d="M991 277.6H1003M991 281.6H1003" stroke="#111" stroke-width="1.4"/><path d="M993.6 284H1000.8L997.2 287.6Z" fill="#111"/><path d="M159.2 319.5V317A2.8 2.8 0 0 1 164.8 317V319.5" stroke="#000" stroke-width="1.5" fill="none"/><rect x="157" y="319" width="10" height="7" rx=".6" fill="#000"/><path d="M86.7 408.5L92.2 411.5L97.6 408.5L92.2 417.6Z" fill="#f24a50"/><rect x="162" y="407" width="7" height="1.4" fill="#111"/><path d="M160.5 408.5H168.5V414.5H165" stroke="#a31a1a" stroke-width="1.3" fill="none"/><rect x="155.6" y="411.6" width="8.6" height="6.8" fill="#fff" stroke="#a31a1a" stroke-width="1.3"/><rect x="155" y="410.5" width="2.5" height="1.2" fill="#111"/><path d="M157.5 417L161 413.5M158.7 413.5H161V415.8" stroke="#a31a1a" stroke-width="1" fill="none"/></svg>
</body></html>
